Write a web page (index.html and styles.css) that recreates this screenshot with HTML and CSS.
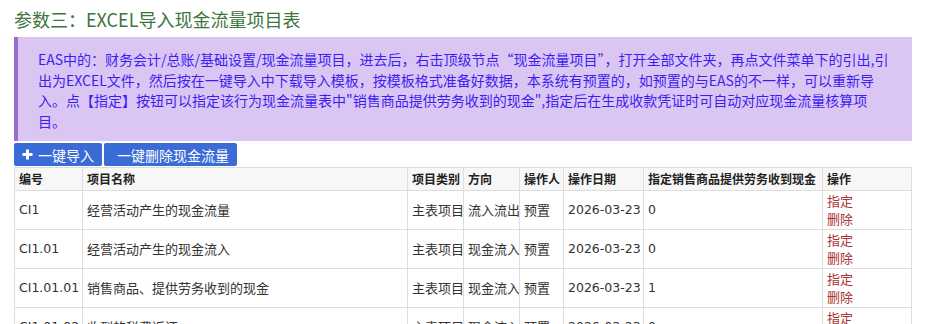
FILE: index.html
```html
<!DOCTYPE html>
<html lang="zh-CN">

<head>
  <meta charset="UTF-8">
  <meta name="viewport" content="width=device-width, initial-scale=1.0">
  <title>参数三：EXCEL导入现金流量项目表</title>

  <link rel="stylesheet" href="styles.css">
</head>

<body>
  <section class="page">
    <h2 class="title">参数三：EXCEL导入现金流量项目表</h2>
    <p class="tip">EAS中的：财务会计/总账/基础设置/现金流量项目，进去后，右击顶级节点“现金流量项目”，打开全部文件夹，再点文件菜单下的引出,引出为EXCEL文件，然后按在一键导入中下载导入模板，按模板格式准备好数据，本系统有预置的，如预置的与EAS的不一样，可以重新导入。点【指定】按钮可以指定该行为现金流量表中"销售商品提供劳务收到的现金",指定后在生成收款凭证时可自动对应现金流量核算项目。</p>

    <div class="toolbar">
      <a class="btn btn-import" href="#">
        <svg class="icon-plus" width="11" height="11" viewBox="0 0 11 11">
          <path d="M5.5 0.5v10M0.5 5.5h10" stroke="#fff" stroke-width="3" fill="none" />
        </svg>
        一键导入
      </a>
      <a class="btn btn-clear" href="#">一键删除现金流量</a>
    </div>

    <table class="grid">
      <colgroup>
        <col style="width:68px">
        <col style="width:325px">
        <col style="width:56px">
        <col style="width:56px">
        <col style="width:44px">
        <col style="width:80px">
        <col style="width:179px">
        <col>
      </colgroup>
      <thead>
        <tr>
          <th>编号</th>
          <th>项目名称</th>
          <th>项目类别</th>
          <th>方向</th>
          <th>操作人</th>
          <th>操作日期</th>
          <th>指定销售商品提供劳务收到现金</th>
          <th>操作</th>
        </tr>
      </thead>
      <tbody id="rows"></tbody>
    </table>
  </section>

  <script>
    const rows = document.querySelector('#rows');
    const data = [
      ['CI1', '经营活动产生的现金流量', '主表项目', '流入流出', '预置', '2026-03-23', '0'],
      ['CI1.01', '经营活动产生的现金流入', '主表项目', '现金流入', '预置', '2026-03-23', '0'],
      ['CI1.01.01', '销售商品、提供劳务收到的现金', '主表项目', '现金流入', '预置', '2026-03-23', '1'],
      ['CI1.01.02', '收到的税费返还', '主表项目', '现金流入', '预置', '2026-03-23', '0'],
      ['CI1.01.03', '收到其他与经营活动有关的现金', '主表项目', '现金流入', '预置', '2026-03-23', '0']
    ];
    let content = '';
    for (let i = 0; i < data.length; i++) {
      const d = data[i];
      content += `<tr>
        <td class="code">${d[0]}</td>
        <td>${d[1]}</td>
        <td>${d[2]}</td>
        <td>${d[3]}</td>
        <td>${d[4]}</td>
        <td class="code">${d[5]}</td>
        <td class="code">${d[6]}</td>
        <td><a class="op" href="#">指定</a><a class="op" href="#">删除</a></td>
      </tr>`;
    }
    rows.innerHTML = content;
  </script>
</body>

</html>
```

FILE: styles.css
```css
* {
  margin: 0;
  padding: 0;
  box-sizing: border-box;
}

body {
  font-family: "Noto Sans CJK SC", "Noto Sans", sans-serif;
  background-color: #fff;
  color: #333;
}

.page {
  padding: 9px 21px 0 14px;
}

.title {
  font-size: 18px;
  line-height: 20px;
  font-weight: normal;
  color: #3c763d;
  margin-bottom: 8px;
}

.tip {
  background-color: #dbc6f3;
  border-left: 4px solid #9b6bcf;
  color: #3d1df5;
  font-size: 14px;
  line-height: 20.5px;
  padding: 12px 20px 10px 20px;
}

.toolbar {
  display: flex;
  gap: 2px;
  margin-top: 2px;
  margin-bottom: 1px;
}

.btn {
  display: flex;
  align-items: center;
  height: 23px;
  background-color: #3a6bd6;
  color: #fff;
  font-size: 14px;
  text-decoration: none;
  border-radius: 2px;
  white-space: nowrap;
}

.btn-import {
  width: 88px;
  padding-left: 8px;
  gap: 5px;
}

.btn-clear {
  width: 133px;
  padding-left: 13px;
}

.grid {
  width: 898px;
  border-collapse: collapse;
  table-layout: fixed;
  font-size: 13px;
  line-height: 18px;
}

.grid th,
.grid td {
  border: 1px solid #ddd;
  padding: 1px 4px;
  text-align: left;
  white-space: nowrap;
  overflow: hidden;
}

.grid th {
  background-color: #f7f7f7;
  color: #222;
  font-size: 12px;
  font-weight: bold;
  padding: 2px 4px;
}

.grid td {
  height: 39px;
}

.code {
  font-family: "DejaVu Sans", "Noto Sans CJK SC", sans-serif;
  font-size: 12.5px;
}

.op {
  display: block;
  color: #a33;
  text-decoration: none;
}
```
